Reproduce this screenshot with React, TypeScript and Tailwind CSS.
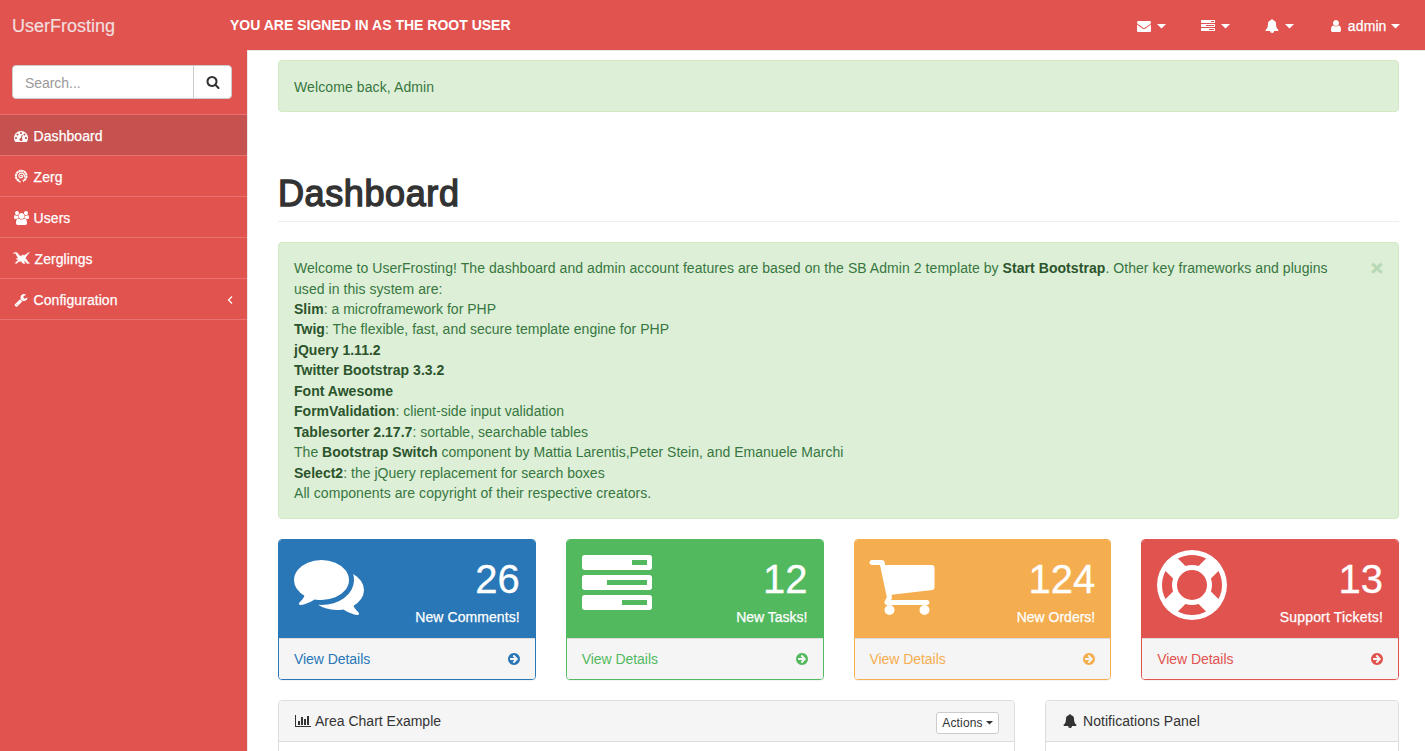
import type { ReactNode } from 'react'

type IconProps = { className?: string; w?: number; d: string }

function Glyph({ className = 'h-3.5', w = 1792, d }: IconProps) {
  return (
    <svg viewBox={`0 0 ${w} 1792`} className={`${className} shrink-0`} fill="currentColor" aria-hidden="true">
      <path d={d} />
    </svg>
  )
}

const ICON = {
  envelope:
    'M1792 710v794q0 66-47 113t-113 47h-1472q-66 0-113-47t-47-113v-794q44 49 101 87 362 246 497 345 57 42 92.5 65.5t94.5 48 110 24.5h2q51 0 110-24.5t94.5-48 92.5-65.5q170-123 498-345 57-39 100-87zm0-294q0 79-49 151t-122 123q-376 261-468 325-10 7-42.5 31t-54 38.5-52 32.5-57.5 27-50 9h-2q-23 0-50-9t-57.5-27-52-32.5-54-38.5-42.5-31q-91-64-262-182.5t-205-142.5q-62-42-117-115.5t-55-136.5q0-78 41.5-130t118.5-52h1472q65 0 112.5 47t47.5 113z',
  search:
    'M1216 832q0-185-131.5-316.5t-316.5-131.5-316.5 131.5-131.5 316.5 131.5 316.5 316.5 131.5 316.5-131.5 131.5-316.5zm512 832q0 52-38 90t-90 38q-54 0-90-38l-343-342q-179 124-399 124-143 0-273.5-55.5t-225-150-150-225-55.5-273.5 55.5-273.5 150-225 225-150 273.5-55.5 273.5 55.5 225 150 150 225 55.5 273.5q0 220-124 399l343 343q37 37 37 90z',
  user: 'M1536 1399q0 109-62.5 187t-150.5 78h-854q-88 0-150.5-78t-62.5-187q0-85 8.5-160.5t31.5-152 58.5-131 94-89 134.5-34.5q131 128 313 128t313-128q76 0 134.5 34.5t94 89 58.5 131 31.5 152 8.5 160.5zm-256-887q0 159-112.5 271.5t-271.5 112.5-271.5-112.5-112.5-271.5 112.5-271.5 271.5-112.5 271.5 112.5 112.5 271.5z',
  comments:
    'M1408 768q0 139-94 257t-256.5 186.5-353.5 68.5q-86 0-176-16-124 88-278 128-36 9-86 16h-3q-11 0-20.5-8t-11.5-21q-1-3-1-6.5t.5-6.5 2-6l2.5-5 3.5-5.5 4-5 4.5-5 4-4.5q5-6 23-25t26-29.5 22.5-29 25-38.5 20.5-44q-124-72-195-177t-71-224q0-139 94-257t256.5-186.5 353.5-68.5 353.5 68.5 256.5 186.5 94 257zm384 256q0 120-71 224.5t-195 176.5q10 24 20.5 44t25 38.5 22.5 29 26 29.5 23 25q1 1 4 4.5t4.5 5 4 5 3.5 5.5l2.5 5 2 6 .5 6.5-1 6.5q-3 14-13 22t-22 7q-50-7-86-16-154-40-278-128-90 16-176 16-271 0-472-132 58 4 88 4 161 0 309-45t264-129q125-92 192-212t67-254q0-77-23-152 129 71 204 178t75 230z',
  tasks:
    'M1024 1408h640v-128h-640v128zm-384-512h1024v-128h-1024v128zm640-512h384v-128h-384v128zm512 832v256q0 26-19 45t-45 19h-1664q-26 0-45-19t-19-45v-256q0-26 19-45t45-19h1664q26 0 45 19t19 45zm0-512v256q0 26-19 45t-45 19h-1664q-26 0-45-19t-19-45v-256q0-26 19-45t45-19h1664q26 0 45 19t19 45zm0-512v256q0 26-19 45t-45 19h-1664q-26 0-45-19t-19-45v-256q0-26 19-45t45-19h1664q26 0 45 19t19 45z',
  cart: 'M704 1536q0 52-38 90t-90 38-90-38-38-90 38-90 90-38 90 38 38 90zm896 0q0 52-38 90t-90 38-90-38-38-90 38-90 90-38 90 38 38 90zm128-1088v512q0 24-16.5 42.5t-40.5 21.5l-1044 122q13 60 13 70 0 16-24 64h920q26 0 45 19t19 45-19 45-45 19h-1024q-26 0-45-19t-19-45q0-11 8-31.5t16-36 21.5-40 15.5-29.5l-177-823h-204q-26 0-45-19t-19-45 19-45 45-19h256q16 0 28.5 6.5t19.5 15.5 13 24.5 8 26 5.5 29.5 4.5 26h1201q26 0 45 19t19 45z',
  support:
    'M896 0q182 0 348 71t286 191 191 286 71 348-71 348-191 286-286 191-348 71-348-71-286-191-191-286-71-348 71-348 191-286 286-191 348-71zm0 128q-190 0-361 90l194 194q82-28 167-28t167 28l194-194q-171-90-361-90zm-678 1129l194-194q-28-82-28-167t28-167l-194-194q-90 171-90 361t90 361zm678 407q190 0 361-90l-194-194q-82 28-167 28t-167-28l-194 194q171 90 361 90zm0-384q159 0 271.5-112.5t112.5-271.5-112.5-271.5-271.5-112.5-271.5 112.5-112.5 271.5 112.5 271.5 271.5 112.5zm484-217l194 194q90-171 90-361t-90-361l-194 194q28 82 28 167t-28 167z',
  arrow:
    'M1413 896q0-27-18-45l-91-91-362-362q-18-18-45-18t-45 18l-91 91q-18 18-18 45t18 45l189 189h-502q-26 0-45 19t-19 45v128q0 26 19 45t45 19h502l-189 189q-19 19-19 45t19 45l91 91q18 18 45 18t45-18l362-362 91-91q18-18 18-45zm251 0q0 209-103 385.5t-279.5 279.5-385.5 103-385.5-103-279.5-279.5-103-385.5 103-385.5 279.5-279.5 385.5-103 385.5 103 279.5 279.5 103 385.5z',
  chart:
    'M640 896v512h-256v-512h256zm384-512v1024h-256v-1024h256zm1024 1152v128h-2048v-1536h128v1408h1920zm-640-896v768h-256v-768h256zm384-384v1152h-256v-1152h256z',
  bell: 'M912 1696q0-16-16-16-59 0-101.5-42.5t-42.5-101.5q0-16-16-16t-16 16q0 73 51.5 124.5t124.5 51.5q16 0 16-16zm816-288q0 52-38 90t-90 38h-448q0 106-75 181t-181 75-181-75-75-181h-448q-52 0-90-38t-38-90q50-42 91-88t85-119.5 74.5-158.5 50-206 19.5-260q0-152 117-282.5t307-158.5q-8-19-8-39 0-40 28-68t68-28 68 28 28 68q0 20-8 39 190 28 307 158.5t117 282.5q0 139 19.5 260t50 206 74.5 158.5 85 119.5 91 88z',
  wrench:
    'M448 1472q0-26-19-45t-45-19-45 19-19 45 19 45 45 19 45-19 19-45zm644-420l-682 682q-37 37-90 37-52 0-91-37l-106-108q-38-36-38-90 0-53 38-91l681-681q39 98 114.5 173.5t173.5 114.5zm634-435q0 39-23 106-47 134-164.5 217.5t-258.5 83.5q-185 0-316.5-131.5t-131.5-316.5 131.5-316.5 316.5-131.5q58 0 121.5 16.5t107.5 46.5q16 11 16 28t-16 28l-293 169v224l193 107q5-3 79-48.5t135.5-81 70.5-35.5q15 0 23.5 10t8.5 25z',
  gauge:
    'M384 1152q0-53-37.5-90.5t-90.5-37.5-90.5 37.5-37.5 90.5 37.5 90.5 90.5 37.5 90.5-37.5 37.5-90.5zm192-448q0-53-37.5-90.5t-90.5-37.5-90.5 37.5-37.5 90.5 37.5 90.5 90.5 37.5 90.5-37.5 37.5-90.5zm428 481l101-382q6-26-7.5-48.5t-38.5-29.5-48 6.5-30 39.5l-101 382q-60 5-107 43.5t-63 98.5q-20 77 20 146t117 89 146-20 89-117q16-60-6-117t-72-91zm660-33q0-53-37.5-90.5t-90.5-37.5-90.5 37.5-37.5 90.5 37.5 90.5 90.5 37.5 90.5-37.5 37.5-90.5zm-640-640q0-53-37.5-90.5t-90.5-37.5-90.5 37.5-37.5 90.5 37.5 90.5 90.5 37.5 90.5-37.5 37.5-90.5zm448 192q0-53-37.5-90.5t-90.5-37.5-90.5 37.5-37.5 90.5 37.5 90.5 90.5 37.5 90.5-37.5 37.5-90.5zm320 448q0 261-141 483-19 29-54 29h-1402q-35 0-54-29-141-221-141-483 0-182 71-348t191-286 286-191 348-71 348 71 286 191 191 286 71 348z',
  users:
    'M593 896q-162 5-265 128h-134q-82 0-138-40.5t-56-118.5q0-353 124-353 6 0 43.5 21t97.5 42.5 119 21.5q67 0 133-23-5 37-5 66 0 139 81 256zm1071 637q0 120-73 189.5t-194 69.5h-874q-121 0-194-69.5t-73-189.5q0-53 3.5-103.5t14-109 26.5-108.5 43-97.5 62-81 85.5-53.5 111.5-20q10 0 43 21.5t73 48 107 48 135 21.5 135-21.5 107-48 73-48 43-21.5q61 0 111.5 20t85.5 53.5 62 81 43 97.5 26.5 108.5 14 109 3.5 103.5zm-1024-1277q0 106-75 181t-181 75-181-75-75-181 75-181 181-75 181 75 75 181zm704 384q0 159-112.5 271.5t-271.5 112.5-271.5-112.5-112.5-271.5 112.5-271.5 271.5-112.5 271.5 112.5 112.5 271.5zm576 225q0 78-56 118.5t-138 40.5h-134q-103-123-265-128 81-117 81-256 0-29-5-66 66 23 133 23 59 0 119-21.5t97.5-42.5 43.5-21q124 0 124 353zm-128-609q0 106-75 181t-181 75-181-75-75-181 75-181 181-75 181 75 75 181z',
}

function Caret({ className = 'w-[9px]' }: { className?: string }) {
  return (
    <svg viewBox="0 0 9 4.5" className={`${className} shrink-0`} fill="currentColor" aria-hidden="true">
      <path d="M0 0H9L4.500 4.500z" />
    </svg>
  )
}

function ZergIcon() {
  return (
    <svg viewBox="0 0 14 14" className="h-3.5 w-3.5 shrink-0" fill="none" stroke="currentColor" aria-hidden="true">
      <path
        d="M6.800 7.200C6.600 6.200 8.200 5.900 8.500 7.100 8.800 8.700 6.500 9.400 5.400 8.100 4.200 6.500 5.300 4.200 7.300 4.100 9.600 4 11 6.200 10.300 8.300"
        strokeWidth="1.200"
      />
      <path
        d="M4.800 11.600C1.400 10 .9 5.600 3.600 3.300 6.300 1 10.600 1.500 12 4.700 13.200 7.600 12 10.800 8.800 11.900"
        strokeWidth="2.100"
        strokeDasharray="2.400 .35"
      />
      <path d="M4 10.600L5.300 12.700 6.800 12.800" strokeWidth="1.300" />
    </svg>
  )
}

function ZerglingIcon() {
  return (
    <svg viewBox="0 0 17 14" className="-ml-px h-3.5 w-[17px] shrink-0" fill="currentColor" stroke="currentColor" strokeWidth="0.5" strokeLinejoin="round" aria-hidden="true">
      <path d="M.4 2.300C1.500 1 3.800 1.100 4.900 2.500L6 4.400 8 5.200 9.800 3.900 11.300 4.400 16.500 1.200 13.200 5.400 12.300 7.600 13.800 8.800 14.900 11 16.600 12.200 14 12.400 12.300 10.200 10.600 9.700 12 12.400 9.800 12.300 8.200 10.200 5.700 10.600 3.900 12.200 2.200 12.300 4.300 9.900 5.600 8.700 3.200 7.900 5.300 6.800 3.800 4.900 3.300 3 2 2.300z" />
    </svg>
  )
}

function NavItem({ icon, label, active, chevron }: { icon: ReactNode; label: string; active?: boolean; chevron?: boolean }) {
  return (
    <li className="border-b border-[#e9716f]">
      <a
        href="#"
        className={`flex h-10 items-center pr-3.5 pl-[13.6px] tracking-[0.05px] text-white [-webkit-text-stroke:0.25px_white] ${active ? 'bg-[#c5524e]' : ''}`}
      >
        {icon}
        <span className="mt-0.5">{label}</span>
        {chevron && (
          <svg viewBox="0 0 6 10" className="mt-px ml-auto h-2.5 w-1.5" fill="none" stroke="currentColor" aria-hidden="true">
            <path d="M5 1.500L1.500 5 5 8.500" strokeWidth="1.200" />
          </svg>
        )}
      </a>
    </li>
  )
}

type StatProps = { icon: ReactNode; value: string; label: ReactNode; panel: string; head: string; link: string }

function StatCard({ icon, value, label, panel, head, link }: StatProps) {
  return (
    <section className={`overflow-hidden rounded border shadow-[0_1px_1px_rgba(0,0,0,0.05)] ${panel}`}>
      <div className={`flex h-[98px] justify-between px-[15px] pt-2.5 text-white ${head}`}>
        {icon}
        <div className="text-right">
          <div className="mt-[7px] text-[40px] leading-[44px] [-webkit-text-stroke:0.3px_white]">{value}</div>
          <div className="mt-[6px] [-webkit-text-stroke:0.25px_white]">{label}</div>
        </div>
      </div>
      <a
        href="#"
        className={`flex h-[41px] items-center justify-between border-t border-[#ddd] bg-[#f5f5f5] pr-3.5 pl-[15px] ${link}`}
      >
        <span className="mt-px tracking-[-0.05px]">View Details</span>
        <Glyph d={ICON.arrow} />
      </a>
    </section>
  )
}

const B = ({ children }: { children: ReactNode }) => <b className="font-bold text-[#2b542c]">{children}</b>

export default function App() {
  return (
    <div className="flex h-[751px] w-[1425px] flex-col overflow-hidden bg-[#e1534f] font-['Liberation_Sans',Arial,sans-serif] text-sm leading-[20.45px] text-[#333]">
      <header className="flex h-[50px] shrink-0 items-center pl-3 text-white">
        <a href="#" className="w-[218px] pt-0.5 text-lg text-[#f3dede] [-webkit-text-stroke:0.2px_#f3dede]">
          UserFrosting
        </a>
        <strong className="text-sm">YOU ARE SIGNED IN AS THE ROOT USER</strong>
        <nav className="ml-auto flex items-center gap-[35px] pt-[3px] pr-[25.500px]">
          <a href="#" className="flex items-center gap-1.5"><Glyph d={ICON.envelope} /><Caret /></a>
          <a href="#" className="flex items-center gap-1.5"><Glyph d={ICON.tasks} /><Caret /></a>
          <a href="#" className="flex items-center gap-1.5"><Glyph d={ICON.bell} /><Caret /></a>
          <a href="#" className="flex items-center">
            <Glyph d={ICON.user} />
            <span className="ml-[5px] tracking-[0.1px] [-webkit-text-stroke:0.25px_white]">admin</span>
            <Caret className="ml-1 w-[9px]" />
          </a>
        </nav>
      </header>

      <div className="flex min-h-0 flex-1">
        <aside className="w-[247px] shrink-0 pt-[15px]">
          <div className="ml-3 flex h-[34px] w-[220px] overflow-hidden rounded border border-[#ccc] bg-white">
            <div className="flex flex-1 items-center pt-0.5 pl-3 tracking-[-0.05px] text-[#999]">Search...</div>
            <div className="flex w-[38px] items-center border-l border-[#ccc] pl-[11.500px] text-[#333]">
              <Glyph d={ICON.search} />
            </div>
          </div>
          <ul className="mt-[15px] border-t border-[#e9716f]">
            <NavItem active label="Dashboard" icon={<Glyph className="mt-0.5 mr-1.5 h-3.5" d={ICON.gauge} />} />
            <NavItem label="Zerg" icon={<span className="mr-1.5"><ZergIcon /></span>} />
            <NavItem label="Users" icon={<Glyph className="mt-0.5 mr-[5px] h-3.5" w={1920} d={ICON.users} />} />
            <NavItem label="Zerglings" icon={<span className="mr-[5px]"><ZerglingIcon /></span>} />
            <NavItem chevron label="Configuration" icon={<Glyph className="mt-0.5 mr-1.5 h-3.5" d={ICON.wrench} />} />
          </ul>
        </aside>

        <main className="min-w-0 flex-1 overflow-hidden border-t border-l border-[#e7e7e7] bg-white pt-[9px] pr-[26px] pl-[30px]">
          <div className="flex h-[52px] items-center rounded border border-[#d3e9c4] bg-[#ddefd7] px-[15px] text-[#37773f]">
            <span className="mt-0.5 tracking-[0.1px]">Welcome back, Admin</span>
          </div>

          <h1 className="mt-[60px] flex h-[50px] items-start border-b border-[#eee] text-4xl leading-[44px] font-normal tracking-[0.6px] [-webkit-text-stroke:1.4px_#333]">
            Dashboard
          </h1>

          <div className="mt-5 flex h-[277px] justify-between rounded border border-[#d3e9c4] bg-[#ddefd7] px-[15px] pt-[15.1px] text-[#37773f]">
            <div className="w-[1055px] tracking-[0.02px]">
              <p className="tracking-[0.06px]">
                Welcome to UserFrosting! The dashboard and admin account features are based on the SB Admin 2 template
                by <B>Start Bootstrap</B>. Other key frameworks and plugins used in this system are:
              </p>
              <ul>
                <li><B>Slim</B>: a microframework for PHP</li>
                <li><B>Twig</B>: The flexible, fast, and secure template engine for PHP</li>
                <li><B>jQuery 1.11.2</B></li>
                <li><B>Twitter Bootstrap 3.3.2</B></li>
                <li><B>Font Awesome</B></li>
                <li><B>FormValidation</B>: client-side input validation</li>
                <li><B>Tablesorter 2.17.7</B>: sortable, searchable tables</li>
                <li>The <B>Bootstrap Switch</B> component by Mattia Larentis,Peter Stein, and Emanuele Marchi</li>
                <li><B>Select2</B>: the jQuery replacement for search boxes</li>
              </ul>
              <p className="tracking-[0.07px]">All components are copyright of their respective creators.</p>
            </div>
            <button className="h-5 text-[21px] leading-5 font-bold text-[#b9d8b4] [-webkit-text-stroke:0.6px_#b9d8b4]">×</button>
          </div>

          <div className="mt-5 grid grid-cols-4 gap-[30px]">
            <StatCard
              value="26" label={<span className="tracking-[0.08px]">New Comments!</span>}
              panel="border-[#2977b7]" head="bg-[#2977b7]" link="text-[#2977b7]"
              icon={<Glyph className="h-[70px]" d={ICON.comments} />}
            />
            <StatCard
              value="12" label="New Tasks!"
              panel="border-[#52b95f]" head="bg-[#52b95f]" link="text-[#52b95f]"
              icon={<Glyph className="h-[70px]" d={ICON.tasks} />}
            />
            <StatCard
              value="124" label="New Orders!"
              panel="border-[#f5ae4f]" head="bg-[#f5ae4f]" link="text-[#f5ae4f]"
              icon={<Glyph className="-ml-[2.5px] h-[70px]" d={ICON.cart} />}
            />
            <StatCard
              value="13" label={<span className="tracking-[0.18px]">Support Tickets!</span>}
              panel="border-[#e1534f]" head="bg-[#e1534f]" link="text-[#e1534f]"
              icon={<Glyph className="h-[70px]" d={ICON.support} />}
            />
          </div>

          <div className="mt-5 flex gap-[30px]">
            <section className="h-40 w-[737px] overflow-hidden rounded border border-[#ddd]">
              <div className="flex h-[41px] items-center border-b border-[#ddd] bg-[#f5f5f5] px-[15px]">
                <Glyph className="ml-px h-3.5" w={2048} d={ICON.chart} />
                <span className="ml-1">Area Chart Example</span>
                <button className="mt-1 ml-auto flex h-[22px] w-[63px] items-center justify-center gap-[3px] rounded-[3px] border border-[#ccc] bg-white text-xs tracking-[0.15px]">
                  Actions <Caret className="w-[7px]" />
                </button>
              </div>
            </section>
            <section className="h-40 flex-1 overflow-hidden rounded border border-[#ddd]">
              <div className="flex h-[41px] items-center border-b border-[#ddd] bg-[#f5f5f5] px-[17px]">
                <Glyph d={ICON.bell} />
                <span className="ml-[6px] tracking-[0.05px]">Notifications Panel</span>
              </div>
            </section>
          </div>
        </main>
      </div>
    </div>
  )
}
